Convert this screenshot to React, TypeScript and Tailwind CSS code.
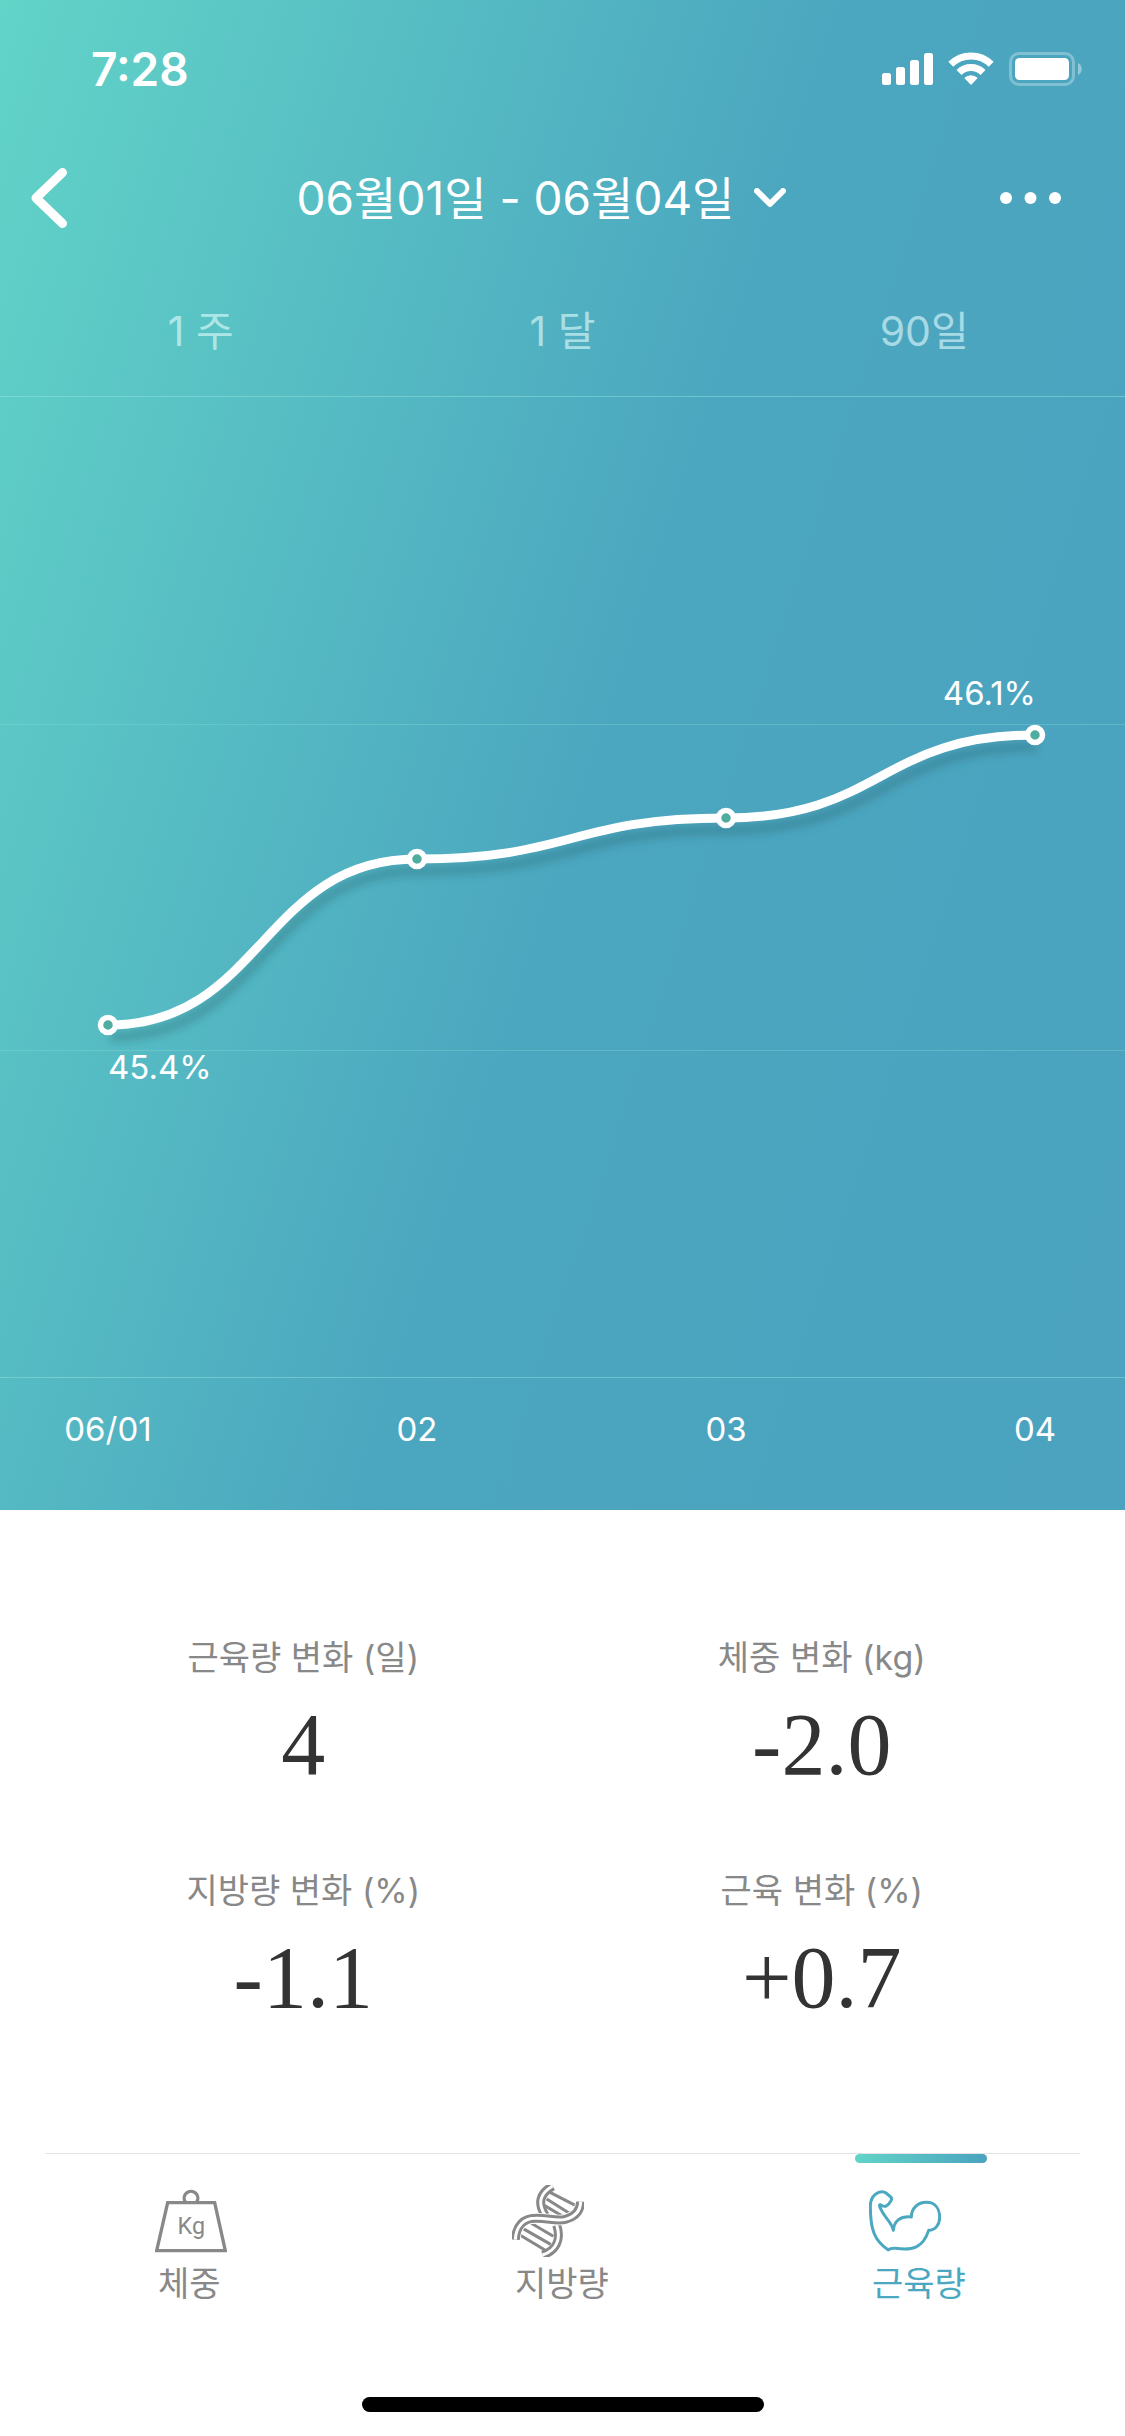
import { useState } from "react";

type Point = {
  label: string;
  x: number;
  y: number;
};

const periods = ["1 주", "1 달", "90일"];

const points: Point[] = [
  { label: "06/01", x: 108, y: 629 },
  { label: "02", x: 417, y: 463 },
  { label: "03", x: 726, y: 422 },
  { label: "04", x: 1035, y: 339 },
];

const stats = [
  { label: "근육량 변화 (일)", value: "4" },
  { label: "체중 변화 (kg)", value: "-2.0" },
  { label: "지방량 변화 (%)", value: "-1.1" },
  { label: "근육 변화 (%)", value: "+0.7" },
];

const tabs = [
  { id: "weight", label: "체중", Icon: WeightIcon },
  { id: "fat", label: "지방량", Icon: DnaIcon },
  { id: "muscle", label: "근육량", Icon: ArmIcon },
];

// horizontal tangents at every point
function smoothPath(items: Point[]) {
  return items
    .map((p, i) => {
      if (i === 0) return `M${p.x} ${p.y}`;
      const prev = items[i - 1];
      const mid = (prev.x + p.x) / 2;
      return `C${mid} ${prev.y} ${mid} ${p.y} ${p.x} ${p.y}`;
    })
    .join(" ");
}

function StatusIcons() {
  return (
    <svg width="201" height="34" viewBox="882 52 201 34" fill="none" aria-hidden="true">
      <g fill="#fff">
        <rect x="882" y="73" width="9" height="12" rx="2.5" />
        <rect x="896" y="67" width="9" height="18" rx="2.5" />
        <rect x="910" y="60" width="9" height="25" rx="2.5" />
        <rect x="924" y="53" width="9" height="32" rx="2.5" />
        <path d="M971 85l-6.700-7a9.600 9.600 0 0 1 13.400 0z" />
      </g>
      <g stroke="#fff" strokeWidth="7">
        <path d="M950.800 64.300a28.500 28.500 0 0 1 40.400 0" />
        <path d="M959 72.500a17 17 0 0 1 24 0" />
      </g>
      <rect x="1010.500" y="53.500" width="63" height="31" rx="8.500" stroke="#fff" strokeOpacity="0.3" strokeWidth="3" />
      <rect x="1015" y="58" width="54" height="22" rx="4.5" fill="#fff" />
      <path d="M1078 63c5 2 5 10 0 12z" fill="#fff" fillOpacity="0.4" />
    </svg>
  );
}

function WeightIcon() {
  return (
    <svg width="72" height="72" viewBox="78 45 216 216" fill="none" stroke="currentColor" strokeWidth="10" aria-hidden="true">
      <path d="M116 98H257L289 242H83Z" />
      <path d="M169 96A20.500 20.500 0 1 1 203 96" />
      <text
        x="187"
        y="193"
        textAnchor="middle"
        fontSize="70"
        fill="currentColor"
        stroke="none"
        className="font-['Roboto',sans-serif]"
      >
        Kg
      </text>
    </svg>
  );
}

function DnaIcon() {
  const back = "M134 15C98 36 86 64 112 104M146 132C160 174 146 208 104 222";
  const front = "M22 176C24 134 48 112 82 112C120 111 146 122 172 115C200 108 217 92 218 62";
  return (
    <svg width="72" height="72" viewBox="12 12 216 216" fill="none" stroke="currentColor" aria-hidden="true">
      <g strokeWidth="9">
        <path d="M126 34L208 76M116 54L196 104M110 74L168 108" />
        <path d="M62 122L136 166M44 142L128 190M32 160L112 208" />
      </g>
      <path d={back} strokeWidth="27" />
      <path d={back} stroke="#fff" strokeWidth="9" />
      <path d={front} stroke="#fff" strokeWidth="32" />
      <path d={front} strokeWidth="27" />
      <path d={front} stroke="#fff" strokeWidth="9" />
    </svg>
  );
}

function ArmIcon() {
  return (
    <svg
      width="72"
      height="72"
      viewBox="90 135 216 216"
      fill="none"
      stroke="currentColor"
      strokeWidth="9"
      strokeLinejoin="round"
      aria-hidden="true"
    >
      <path d="M163 271C159 246 134 232 123 202Q119 192 126 195Q132 201 142 198Q149 194 156 182Q161 175 152 168L141 159Q132 152 119 157C101 165 94 177 94 198C94 266 105 302 148 330Q154 324 170 325C220 332 252 324 269 271C290 270 302 253 302 232C302 203 286 187 262 187C237 187 217 204 217 231C185 227 165 243 163 271Z" />
    </svg>
  );
}

function MuscleChart() {
  const path = smoothPath(points);

  return (
    <svg viewBox="0 0 1125 1114" className="block w-full font-['Inter','Noto_Sans_CJK_KR',sans-serif]" role="img" aria-label="근육량 변화">
      <defs>
        <filter id="line-shadow" x="-5%" y="-20%" width="110%" height="150%">
          <feGaussianBlur stdDeviation="4" />
        </filter>
      </defs>
      <g fill="#8fe3dc">
        <rect y="0" width="1125" height="1" fillOpacity="0.5" />
        <rect y="328" width="1125" height="1" fillOpacity="0.3" />
        <rect y="654" width="1125" height="1" fillOpacity="0.3" />
        <rect y="981" width="1125" height="1" fillOpacity="0.5" />
      </g>
      <path d={path} fill="none" stroke="#23636f" strokeOpacity="0.36" strokeWidth="10" transform="translate(2 12)" filter="url(#line-shadow)" />
      <path d={path} fill="none" stroke="#fff" strokeWidth="9" />
      {points.map((p) => (
        <g key={p.label}>
          <circle cx={p.x} cy={p.y} r="7.5" fill="#4fada0" stroke="#fff" strokeWidth="5.5" />
          <text x={p.x} y="1045" textAnchor="middle" fontSize="33" fill="#fff">
            {p.label}
          </text>
        </g>
      ))}
      <text x="108" y="683" fontSize="33" fill="#fff">
        45.4%
      </text>
      <text x="1036" y="309" textAnchor="end" fontSize="33" fill="#fff">
        46.1%
      </text>
    </svg>
  );
}

export default function App() {
  const [period, setPeriod] = useState("");
  const [activeTab, setActiveTab] = useState("muscle");

  return (
    <div className="min-h-screen bg-white font-['Inter','Noto_Sans_CJK_KR',sans-serif]">
      <section className="bg-[linear-gradient(108deg,#62d4c8_0%,#4ba6bf_53%,#4ba3bf_100%)] text-white">
        <div className="flex h-[138px] items-center justify-between pl-[91px] pr-[42px]">
          <span className="text-[46px] font-semibold leading-none">7:28</span>
          <StatusIcons />
        </div>

        <header className="flex h-[120px] items-center justify-between pl-[31px] pr-16">
          <button type="button" aria-label="뒤로" className="w-[52px]">
            <svg width="36" height="60" viewBox="0 0 36 60" fill="none" stroke="#fff" strokeWidth="9" strokeLinecap="round" strokeLinejoin="round">
              <path d="M31.500 4.500L5 30L31.500 55.500" />
            </svg>
          </button>
          <button type="button" className="flex items-center gap-5 text-[46px] leading-none">
            <span>06월01일 - 06월04일</span>
            <svg width="32" height="20" viewBox="0 0 32 20" fill="none" stroke="#fff" strokeWidth="6" strokeLinecap="round" strokeLinejoin="round">
              <path d="M3 3L16 16L29 3" />
            </svg>
          </button>
          <button type="button" aria-label="더보기">
            <svg width="61" height="12" viewBox="0 0 61 12" fill="#fff">
              <circle cx="6" cy="6" r="6" />
              <circle cx="30.500" cy="6" r="6" />
              <circle cx="55" cy="6" r="6" />
            </svg>
          </button>
        </header>

        <div className="grid h-[138px] grid-cols-3 items-center px-5 pt-2 text-[41px] leading-none">
          {periods.map((item) => (
            <button
              key={item}
              type="button"
              onClick={() => setPeriod(item)}
              className={period === item ? "text-white" : "text-[#e8ffff]/60"}
            >
              {item}
            </button>
          ))}
        </div>

        <MuscleChart />
      </section>

      <dl className="grid grid-cols-2 gap-y-[75px] px-11 pt-[124px] text-center">
        {stats.map((item) => (
          <div key={item.label}>
            <dt className="text-[34px] leading-[48px] text-[#888]">{item.label}</dt>
            <dd className="mt-4 font-['Liberation_Serif',serif] text-[88px] leading-[94px] text-[#333]">{item.value}</dd>
          </div>
        ))}
      </dl>

      <nav className="mx-[45px] mt-32 flex justify-between border-t border-[#e3e3e3] pl-24 pr-[93px]">
        {tabs.map(({ id, label, Icon }) => {
          const active = id === activeTab;
          return (
            <button
              key={id}
              type="button"
              onClick={() => setActiveTab(id)}
              className={`w-[132px] text-left ${active ? "text-[#4ba8c0]" : "text-[#888]"}`}
            >
              <span
                className={`block h-[9px] rounded-full ${active ? "bg-[linear-gradient(90deg,#62d4c8,#4ba3bf)]" : "bg-transparent"}`}
              />
              <span className="mt-[22px] block px-[14px]">
                <Icon />
                <span className="mt-[3px] block whitespace-nowrap pl-[3px] text-[34px] leading-[48px]">{label}</span>
              </span>
            </button>
          );
        })}
      </nav>

      <div className="flex justify-center pb-6 pt-[89px]">
        <div className="h-[15px] w-[402px] rounded-full bg-black" />
      </div>
    </div>
  );
}
